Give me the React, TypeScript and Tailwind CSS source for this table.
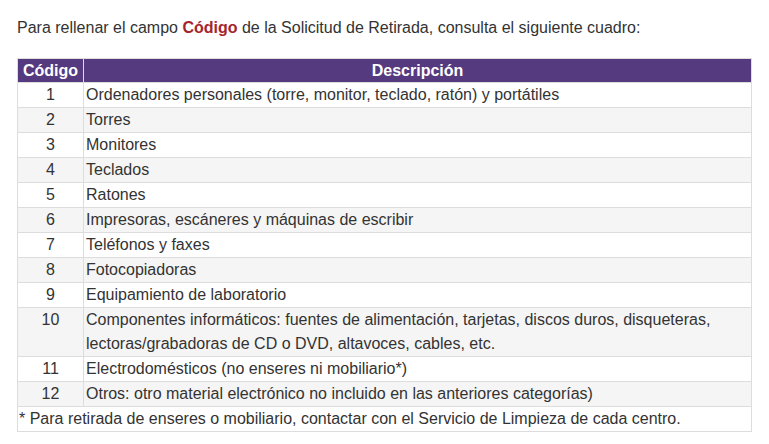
import React from "react";

const rows: [string, string][] = [
  ["1", "Ordenadores personales (torre, monitor, teclado, ratón) y portátiles"],
  ["2", "Torres"],
  ["3", "Monitores"],
  ["4", "Teclados"],
  ["5", "Ratones"],
  ["6", "Impresoras, escáneres y máquinas de escribir"],
  ["7", "Teléfonos y faxes"],
  ["8", "Fotocopiadoras"],
  ["9", "Equipamiento de laboratorio"],
  [
    "10",
    "Componentes informáticos: fuentes de alimentación, tarjetas, discos duros, disqueteras, lectoras/grabadoras de CD o DVD, altavoces, cables, etc.",
  ],
  ["11", "Electrodomésticos (no enseres ni mobiliario*)"],
  ["12", "Otros: otro material electrónico no incluido en las anteriores categorías)"],
];

export default function App() {
  return (
    <div className="min-h-screen bg-white px-[17px] pt-[16px] font-[family-name:'Liberation_Sans',Arial,sans-serif] text-[16px] text-[#333]">
      <p className="mb-[18px] leading-[24px]">
        Para rellenar el campo <strong className="text-[#a4262c]">Código</strong> de la Solicitud
        de Retirada, consulta el siguiente cuadro:
      </p>
      <table className="w-[735px] border-collapse leading-[24px]">
        <thead>
          <tr className="bg-[#553a80] text-white">
            <th className="w-[66px] border border-[#ddd] px-[2px] text-center font-bold leading-[23px]">
              Código
            </th>
            <th className="border border-[#ddd] px-[2px] text-center font-bold leading-[23px]">
              Descripción
            </th>
          </tr>
        </thead>
        <tbody>
          {rows.map(([code, desc], i) => (
            <tr key={code} className={i % 2 === 1 ? "bg-[#f5f5f5]" : "bg-white"}>
              <td className="border border-[#ddd] px-[2px] text-center align-top">{code}</td>
              <td className="border border-[#ddd] pl-[2px] pr-[4px] align-top">{desc}</td>
            </tr>
          ))}
          <tr className="bg-white">
            <td colSpan={2} className="border border-[#ddd] px-[1px]">
              * Para retirada de enseres o mobiliario, contactar con el Servicio de Limpieza de cada
              centro.
            </td>
          </tr>
        </tbody>
      </table>
    </div>
  );
}
